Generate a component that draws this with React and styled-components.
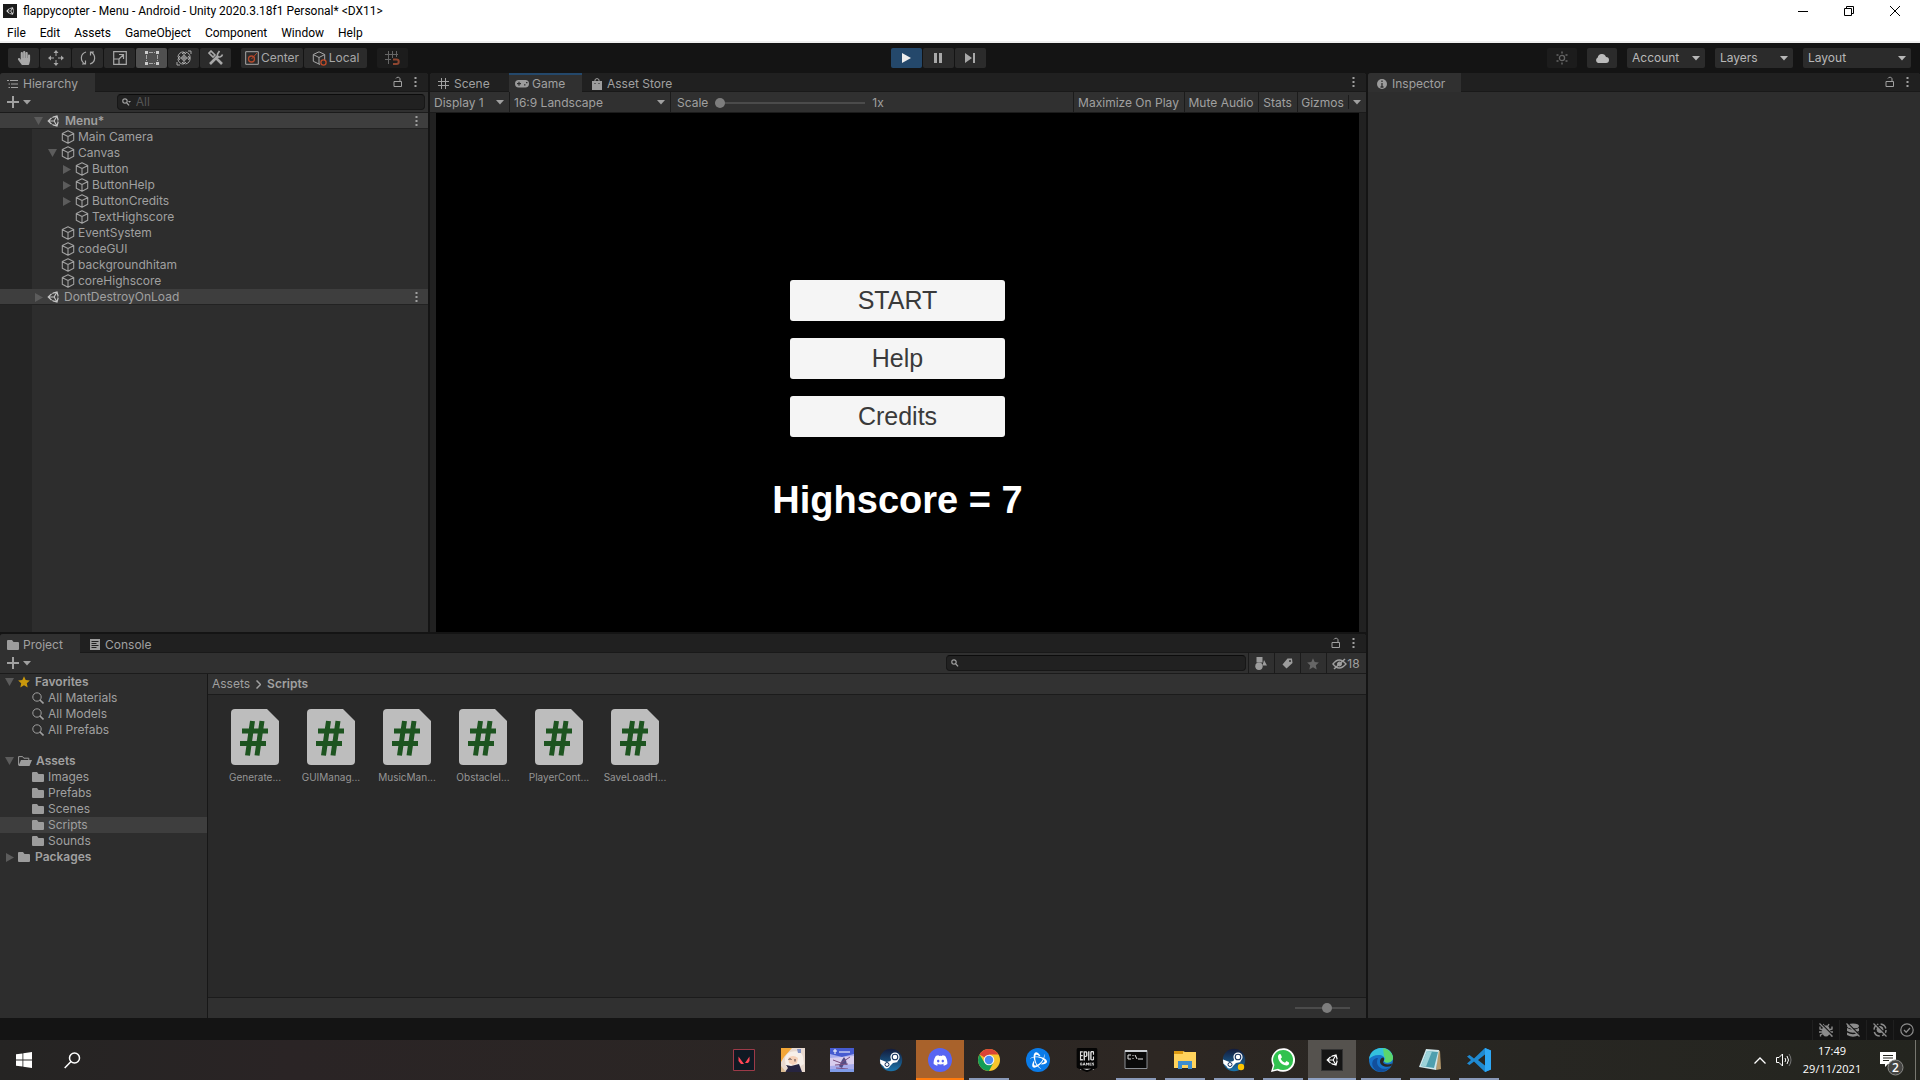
import React from "react";
import styled, { createGlobalStyle, css } from "styled-components";
import { FaDiscord } from "react-icons/fa6";
import { FaHandPaper } from "react-icons/fa";
import { SiEpicgames, SiBattledotnet } from "react-icons/si";

const c = {
  chrome: "#141414",
  strip: "#202020",
  bar: "#303030",
  panel: "#2d2d2d",
  gutter: "#252525",
  line: "#1b1b1b",
  row: "#3e3e3e",
  text: "#a0a0a0",
  icon: "#9c9c9c",
  blue: "#24486b",
};

const GlobalStyle = createGlobalStyle`
  * { box-sizing: border-box; }
  body { margin: 0; background: ${c.chrome}; }
  button, input, select { font: inherit; color: inherit; margin: 0; padding: 0; border: 0; border-radius: 0; background: none; }
  ul { list-style: none; margin: 0; padding: 0; }
  svg { display: block; flex: none; }
`;

/* ---------- shell ---------- */

const Desktop = styled.div`
  display: flex;
  flex-direction: column;
  height: 100vh;
  overflow: hidden;
  color: ${c.text};
  font: 12px/16px Inter, Roboto, sans-serif;
`;

const WindowHead = styled.header`
  background: #fff;
  color: #000;
  font: 12px/22px Roboto, "Noto Sans", sans-serif;
  border-bottom: 2px solid #f0f0f0;
`;

const TitleBar = styled.div`
  display: flex;
  align-items: center;
  height: 22px;
  padding: 0 2px 0 3px;
  gap: 6px;
`;

const Title = styled.span`
  flex: 1;
`;

const WindowControls = styled.div`
  display: flex;
  button {
    display: grid;
    place-items: center;
    width: 46px;
    height: 20px;
  }
`;

const MenuBar = styled.nav`
  display: flex;
  height: 19px;
  gap: 14px;
  padding-left: 7px;
  button {
    line-height: 22px;
  }
`;

const Toolbar = styled.div`
  display: grid;
  grid-template-columns: 1fr auto 1fr;
  align-items: center;
  height: 30px;
  flex: none;
  padding: 0 9px 0 8px;
`;

const ToolSet = styled.div`
  display: flex;
  gap: ${(p) => p.$gap || 10}px;
  ${(p) => p.$end && "justify-content: flex-end;"}
  ${(p) => p.$mid && "margin-right: 43px;"}
`;

const ButtonRun = styled.div`
  display: flex;
  gap: 1px;
`;

const ToolButton = styled.button`
  display: flex;
  align-items: center;
  justify-content: center;
  gap: 2px;
  width: ${(p) => p.$w || 31}px;
  height: 20px;
  border-radius: 2px;
  background: ${(p) => (p.$play ? c.blue : p.$on ? "#505050" : p.$off ? "#1c1c1c" : "#2b2b2b")};
  color: ${(p) => (p.$play ? "#eee" : "#a8a8a8")};
`;

const SelectWrap = styled.label`
  display: flex;
  align-items: center;
  position: relative;
  width: ${(p) => p.$w}px;
  height: 20px;
  ${(p) => (p.$flat ? `border-right: 1px solid ${c.line}; padding-top: 1px;` : "border-radius: 2px; background: #2b2b2b; color: #b8b8b8;")}
  select {
    appearance: none;
    width: 100%;
    height: 100%;
    padding-left: ${(p) => (p.$flat ? 4 : 5)}px;
    background: transparent;
    outline: none;
  }
  svg {
    position: absolute;
    right: 5px;
    pointer-events: none;
  }
`;

const Workspace = styled.main`
  flex: 1;
  min-height: 0;
  display: grid;
  grid-template-columns: 1366fr 552fr;
  gap: 2px;
`;

const LeftSide = styled.div`
  display: grid;
  grid-template-rows: 559fr 384fr;
  gap: 2px;
  min-height: 0;
  min-width: 0;
`;

const TopRow = styled.div`
  display: grid;
  grid-template-columns: 428fr 936fr;
  gap: 2px;
  min-height: 0;
`;

const Panel = styled.section`
  display: flex;
  flex-direction: column;
  min-width: 0;
  min-height: 0;
  background: ${c.panel};
  border-radius: 3px 3px 0 0;
  overflow: hidden;
`;

const TabStrip = styled.div`
  display: flex;
  flex: none;
  height: 19px;
  background: ${c.strip};
  border-bottom: 1px solid #191919;
`;

const Tab = styled.button`
  display: flex;
  align-items: center;
  gap: ${(p) => p.$gap || 5}px;
  width: ${(p) => p.$w}px;
  height: 19px;
  padding: 2px 0 0 ${(p) => p.$pad || 7}px;
  background: ${(p) => (p.$on ? c.bar : "transparent")};
  ${(p) => p.$focus && css`box-shadow: inset 0 2px ${c.blue};`}
  white-space: nowrap;
`;

const TabTools = styled.div`
  display: flex;
  align-items: center;
  gap: 11px;
  margin-left: auto;
  padding-right: 11px;
  button { display: block; }
`;

const SubBar = styled.div`
  display: flex;
  align-items: center;
  flex: none;
  height: 21px;
  background: ${c.bar};
  border-bottom: 1px solid ${c.line};
`;

const AddButton = styled.button`
  display: flex;
  align-items: center;
  gap: 4px;
  width: 40px;
  padding-left: 7px;
`;

const SearchBox = styled.label`
  display: flex;
  align-items: center;
  gap: 5px;
  height: 16px;
  margin-left: auto;
  padding-left: 4px;
  background: #212121;
  border: 1px solid #171717;
  border-top-color: #0c0c0c;
  border-radius: 4px;
  width: ${(p) => p.$w};
  margin-right: ${(p) => p.$mr}px;
  input { flex: 1; min-width: 0; outline: none; height: 14px; }
  input::placeholder { color: #565656; opacity: 1; }
`;

/* ---------- trees ---------- */

const Tree = styled.ul`
  flex: 1;
  min-height: 0;
  background: ${(p) => (p.$gutter ? `linear-gradient(90deg, ${c.gutter} 32px, ${c.panel} 32px)` : c.panel)};
`;

const TreeRow = styled.li`
  display: flex;
  align-items: center;
  height: 16px;
  padding-left: ${(p) => p.$indent}px;
  margin-top: ${(p) => p.$mt || 0}px;
  font-weight: ${(p) => (p.$bold ? 600 : 400)};
  background: ${(p) => (p.$on ? c.row : "transparent")};
  ${(p) => p.$scene && css`box-shadow: inset 0 -1px #222;`}
  span { flex: 1; padding-left: ${(p) => p.$gap || 4}px; }
`;

const Fold = styled.button`
  display: grid;
  place-items: center;
  width: 9px;
  height: 16px;
  margin-right: 4px;
  color: #5c5c5c;
`;

const RowMenu = styled.button`
  margin-right: 10px;
`;

/* ---------- game view ---------- */

const ScaleField = styled.label`
  display: flex;
  align-items: center;
  gap: 7px;
  padding: 1px 0 0 6px;
`;

const Range = styled.input`
  appearance: none;
  width: ${(p) => p.$w}px;
  height: 10px;
  &::-webkit-slider-runnable-track { height: 2px; background: #4b4b4b; }
  &::-webkit-slider-thumb {
    appearance: none;
    width: 10px;
    height: 10px;
    margin-top: -4px;
    border-radius: 50%;
    background: #7d7d7d;
  }
`;

const FlatButtons = styled.div`
  display: flex;
  margin-left: auto;
  height: 20px;
`;

const FlatButton = styled.button`
  display: flex;
  align-items: center;
  justify-content: center;
  width: ${(p) => p.$w}px;
  height: 20px;
  padding: 1px 1px 0 0;
  border-left: 1px solid ${c.line};
  ${(p) => p.$inner && "height: 14px; margin-top: 3px;"}
`;

const Stage = styled.div`
  flex: 1;
  min-height: 0;
  padding: 0 7px 0 6px;
  background: #212121;
`;

const GameScreen = styled.div`
  height: 100%;
  display: flex;
  flex-direction: column;
  align-items: center;
  gap: 17px;
  padding-top: 167px;
  background: #000;
  font-family: "Liberation Sans", Arial, sans-serif;
`;

const GameButton = styled.button`
  width: 215px;
  height: 41px;
  padding-bottom: 2px;
  border-radius: 3px;
  background: #f5f5f5;
  color: #3a3a3a;
  font-size: 25px;
  line-height: 38px;
`;

const Highscore = styled.h1`
  margin: 25px 0 0;
  color: #fff;
  font-size: 38px;
  line-height: 42px;
`;

/* ---------- project ---------- */

const ProjectBody = styled.div`
  flex: 1;
  min-height: 0;
  display: flex;
`;

const Folders = styled.aside`
  display: flex;
  width: 208px;
  border-right: 1px solid #171717;
`;

const Browser = styled.div`
  flex: 1;
  min-width: 0;
  display: flex;
  flex-direction: column;
  background: #292929;
`;

const Crumbs = styled.nav`
  display: flex;
  align-items: center;
  gap: 6px;
  height: 21px;
  padding-left: 4px;
  background: #323232;
  border-bottom: 1px solid ${c.line};
  b { font-weight: 600; }
`;

const FileGrid = styled.ul`
  flex: 1;
  display: flex;
  flex-wrap: wrap;
  align-content: flex-start;
  padding: 14px 9px;
`;

const FileItem = styled.li`
  display: flex;
  flex-direction: column;
  align-items: center;
  gap: 4px;
  width: 76px;
  font-size: 10px;
  color: #969696;
  white-space: nowrap;
`;

const BrowserFoot = styled.div`
  display: flex;
  align-items: center;
  justify-content: flex-end;
  height: 21px;
  padding-right: 16px;
  background: #303030;
  border-top: 1px solid ${c.line};
`;

const StatusBar = styled.footer`
  display: flex;
  justify-content: flex-end;
  flex: none;
  height: 22px;
  padding-top: 2px;
  button {
    display: grid;
    place-items: center;
    width: 27px;
    border-left: 1px solid #1f1f1f;
    color: #8c8c8c;
  }
`;

/* ---------- taskbar ---------- */

const Taskbar = styled.footer`
  display: grid;
  grid-template-columns: 720fr auto 417fr;
  flex: none;
  height: 40px;
  color: #fff;
  background: linear-gradient(90deg, #252423, #2a2425 15%, #2b2624 45%, #2d2723 60%, #272622 80%, #24251f);
  font: 11px/18px "Open Sans", "Noto Sans", sans-serif;
`;

const TaskGroup = styled.div`
  display: flex;
  gap: ${(p) => p.$gap || 0}px;
`;

const Task = styled.button`
  display: grid;
  place-items: center;
  width: 48px;
  height: 40px;
  background: ${(p) => (p.$alert ? "#a9622b" : p.$active ? "#55524e" : "transparent")};
  ${(p) => p.$open && css`
    background: linear-gradient(#8999b8, #8999b8) center bottom / 40px 2px no-repeat;
  `}
  ${(p) => p.$active && "box-shadow: inset 0 -2px #8fa2c4;"}
  ${(p) => p.$alert && "box-shadow: inset 0 -2px #ff7b0d;"}
`;

const Tray = styled.div`
  display: flex;
  align-items: center;
  justify-content: flex-end;
`;

const TrayButton = styled.button`
  display: grid;
  place-items: center;
  width: ${(p) => p.$w}px;
  height: 40px;
  padding-top: ${(p) => p.$pt || 0}px;
`;

const Clock = styled.time`
  width: 72px;
  text-align: center;
  white-space: pre-line;
`;

const ShowDesktop = styled.button`
  width: 5px;
  height: 40px;
  border-left: 1px solid #77776f;
`;

const AppTile = styled.span`
  display: grid;
  place-items: center;
  width: ${(p) => p.$s || 24}px;
  height: ${(p) => p.$s || 24}px;
  background: ${(p) => p.$bg};
  border-radius: ${(p) => (p.$round ? "50%" : 0)};
  border: ${(p) => p.$border || 0};
`;

const EpicTile = styled.span`
  display: grid;
  place-items: center;
  width: 24px;
  height: 24px;
  background: linear-gradient(#dcdcdc, #dcdcdc) center / 14px 20px no-repeat;
`;

/* ---------- glyphs ---------- */

const Svg = ({ w = 14, h, vb, children, ...rest }) => (
  <svg width={w} height={h || w} viewBox={vb || `0 0 ${w} ${h || w}`} fill="none" stroke="currentColor" aria-hidden="true" {...rest}>
    {children}
  </svg>
);
const UnityMark = ({ size, color }) => (
  <Svg w={size} vb="0 0 512 512" stroke="none" fill={color}>
    <path d="M498.110 206.400L445.310 14.720 248.200 66.080 219 116.140l-59.200-.430L15.540 256l144.280 140.320 59.170-.430 29.240 50 197.080 51.360 52.800-191.620-30-49.630zM223.770 124.200L374.550 86.510 288 232.330H114.870zM223.770 387.830L114.870 279.710H288l86.550 145.810zM416.770 401.830L330.170 256l86.580-145.840L458.560 256z" fillRule="evenodd" />
  </Svg>
);
const Caret = () => <Svg w={8} h={5}><path d="M0 0h8L4 4.6z" fill="currentColor" stroke="none" /></Svg>;
const Dots = () => <Svg w={3} h={12} fill="currentColor" stroke="none"><path d="M.5 1h2v2h-2zM.5 5h2v2h-2zM.5 9h2v2h-2z" /></Svg>;
const Lock = () => <Svg w={10} h={12}><path d="M1 5.500h7.500v5H1zM3 2.500C3 1 7 .5 7 3v2.500" /></Svg>;
const Plus = () => <Svg w={12} strokeWidth="2"><path d="M6 0v12M0 6h12" /></Svg>;
const Cube = () => <Svg w={14}><path d="M7 .8l5.700 2.700v6.800L7 13.300l-5.700-3V3.500zM1.500 3.700L7 6.500l5.500-2.800M7 6.500v6.600" strokeWidth="1.1" strokeLinejoin="round" /></Svg>;
const Folder = () => <Svg w={12} h={10} fill={c.icon} stroke="none"><path d="M0 1Q0 0 1 0h4l1.500 2H11q1 0 1 1v6q0 1-1 1H1q-1 0-1-1z" /></Svg>;
const FolderOpen = () => <Svg w={14} h={10}><path d="M.6 9V.6h4l1.200 1.600h5v2" stroke={c.icon} /><path d="M3 4h11l-2.500 6H.4z" fill={c.icon} stroke="none" /></Svg>;
const Lens = () => <Svg w={12}><circle cx="5" cy="5" r="4.2" /><path d="M8 8l3.500 3.500" strokeWidth="1.6" /></Svg>;
const SmallLens = ({ menu }) => <Svg w={9} h={8}><circle cx="3" cy="3" r="2.2" strokeWidth="1.2" /><path d="M4.600 4.600L7 7.400" strokeWidth="1.4" />{menu && <path d="M6 3h3L7.500 4.800z" fill="currentColor" stroke="none" />}</Svg>;
const Star = ({ color }) => <Svg w={12}><path d="M6 .2l1.700 3.900 4.200.4-3.100 2.800.9 4.200L6 9.300l-3.700 2.200.9-4.200L.1 4.500l4.200-.4z" fill={color} stroke="none" /></Svg>;
const Down = () => <Svg w={9} h={8}><path d="M0 0h9L4.500 8z" fill="currentColor" stroke="none" /></Svg>;
const Right = () => <Svg w={8} h={9}><path d="M0 0v9l8-4.500z" fill="currentColor" stroke="none" /></Svg>;
const Slash = () => <><path d="M1.500 0l13 13" stroke={c.chrome} strokeWidth="1.300" /><path d="M.5.500l13 13" strokeWidth="1.200" /></>;
const Bug = () => <><ellipse cx="7" cy="8" rx="4" ry="5.500" fill="currentColor" stroke="none" /><path d="M4 1l1.500 2.500h3L10 1M1 3.500V6l3 1M0 9h4M1.500 13.500V12L4 10.500M13 3.500V6l-3 1M14 9h-4M12.500 13.500V12L10 10.500" strokeWidth="1.400" /></>;

const ScriptFile = () => (
  <Svg w={48} h={56} stroke="none">
    <path d="M4 0h32l12 12v40q0 4-4 4H4q-4 0-4-4V4q0-4 4-4z" fill="#bdbdbd" />
    <path d="M21.500 12L16.500 46.500M31 12l-5 34.500M11 22h26M9 34.500h26" stroke="#1d5420" strokeWidth="5" />
  </Svg>
);

const toolIcons = [
  ["Hand", <FaHandPaper size={14} />],
  ["Move", <Svg w={16}><path d="M8 2v4M8 10v4M2 8h4M10 8h4" /><path d="M8 0l2.500 3h-5zM8 16l2.500-3h-5zM0 8l3-2.500v5zM16 8l-3-2.500v5z" fill="currentColor" stroke="none" /></Svg>],
  ["Rotate", <Svg w={16} h={14}><path d="M6 1C0 3 0 10 5 13M10 13c6-2 6-9 1-12M2 13h3.500V9.500M14 1h-3.500v3.500" strokeWidth="1.200" /></Svg>],
  ["Scale", <Svg w={14}><path d="M.7.7h12.600v12.600H.7zM.7 8h5.300v5M6 3.500h4.500V8M10.500 3.500L5.500 8.500" strokeWidth="1.200" /></Svg>],
  ["Rect", <Svg w={14}><path d="M4 1.500h6M4 12.500h6M1.500 4v6M12.500 4v6" strokeDasharray="4 1" /><path d="M0 0h3v3H0zM11 0h3v3h-3zM0 11h3v3H0zM11 11h3v3h-3z" fill="#ccc" stroke="none" /></Svg>],
  ["Transform", <Svg w={16}><circle cx="8" cy="8" r="6.200" strokeDasharray="8 2" /><path d="M8 2v12M2 8h12M6 4l2-2 2 2M6 12l2 2 2-2M4 6L2 8l2 2M12 6l2 2-2 2M12 1h3v3M4 15H1v-3" /><circle cx="8" cy="8" r="2.300" /></Svg>],
  ["Custom tools", <Svg w={16}><path d="M2 14l8-8M7 7l7 7" strokeWidth="2.600" /><path d="M14.500 4.500a3.500 3.500 0 01-5 2L9.500 4l2-3M1 3l2-2 4 4-2 2z" strokeWidth="1.600" /></Svg>],
];

const hierarchy = [
  { n: "Menu*", d: 0, scene: 1, fold: "open", bold: 1 },
  { n: "Main Camera", d: 1 },
  { n: "Canvas", d: 1, fold: "open" },
  { n: "Button", d: 2, fold: "shut" },
  { n: "ButtonHelp", d: 2, fold: "shut" },
  { n: "ButtonCredits", d: 2, fold: "shut" },
  { n: "TextHighscore", d: 2 },
  { n: "EventSystem", d: 1 },
  { n: "codeGUI", d: 1 },
  { n: "backgroundhitam", d: 1 },
  { n: "coreHighscore", d: 1 },
  { n: "DontDestroyOnLoad", d: 0, scene: 1, fold: "shut" },
];

const folders = [
  { n: "Favorites", root: 1, fold: "open", icon: <Star color="#c9980c" /> },
  { n: "All Materials", icon: <Lens /> },
  { n: "All Models", icon: <Lens /> },
  { n: "All Prefabs", icon: <Lens /> },
  { n: "Assets", root: 1, fold: "open", icon: <FolderOpen />, mt: 15 },
  { n: "Images", icon: <Folder /> },
  { n: "Prefabs", icon: <Folder /> },
  { n: "Scenes", icon: <Folder /> },
  { n: "Scripts", icon: <Folder />, on: 1 },
  { n: "Sounds", icon: <Folder /> },
  { n: "Packages", root: 1, fold: "shut", icon: <Folder /> },
];

const files = ["Generate...", "GUIManag...", "MusicMan...", "ObstacleI...", "PlayerCont...", "SaveLoadH..."];

const Steam = ({ dot }) => (
  <Svg w={24} stroke="none">
    <defs><linearGradient id="steamBg" x1="0" y1="0" x2="0" y2="1"><stop offset="0" stopColor="#131b3b" /><stop offset="1" stopColor="#1b74ab" /></linearGradient></defs>
    <circle cx="12" cy="12" r="11.200" fill="url(#steamBg)" />
    <path d="M1 11.500l6.500 2.500 4-1 1.500-5 6 6-5 1-3 3c-1 3-5 3.500-6.300.500L1.300 15.500z" fill="#fff" />
    <circle cx="16" cy="9" r="4.600" fill="#fff" /><circle cx="16" cy="9" r="2.800" fill="#fff" stroke="#17335e" strokeWidth="1.100" />
    <circle cx="8" cy="16.500" r="2" stroke="#17335e" />
    {dot && <circle cx="19" cy="19" r="3.200" fill="#fdc500" />}
  </Svg>
);

const apps = [
  ["Valorant", <Svg w={22} stroke="none"><path d="M.5.500h21v21H.5z" fill="#0f1923" stroke="#9c3a48" /><path d="M5.500 7.500l5.500 7.500H8L5.500 12zM16.500 7.500V12l-1.500 2h-3z" fill="#ff4655" /></Svg>],
  ["Genshin Impact", <Svg w={24} stroke="none"><path d="M0 0h24v24H0z" fill="#e8d9cf" /><path d="M0 0h11L3 9 0 14z" fill="#f3a637" /><path d="M4 12C3 2 21 0 22 9l1 7-5 3H5z" fill="#f7efe9" /><path d="M7 10q5-4 10 0l-1 5-4 2-4-2z" fill="#f6d1b8" /><path d="M7.500 11.500q1.500-1.500 3 0M14 11v2.500" stroke="#4a3c44" /><path d="M5 17l5 1 8-2 3 8H4l3-4z" fill="#262440" /><path d="M16 1h4v4h-3z" fill="#8193c7" /><path d="M0 18l5 6H0z" fill="#d9b98f" /></Svg>],
  ["Honkai Impact", <Svg w={24} stroke="none"><path d="M0 0h24v24H0z" fill="#a8acec" /><path d="M0 0h24v6L12 9 0 6z" fill="#465bd0" /><path d="M3 3h4M5 1v5M9 4h11" stroke="#fff" /><path d="M0 10l24-2v8L0 18z" fill="#d8cdee" /><path d="M9 18l3-6 2-3 2 3 1 5-3-1-2 4-2-1z" fill="#514d86" /><path d="M3 12l8 3 9-6M6 20l12 1M5 17l13-1" stroke="#7d5080" /><path d="M0 21h24v3H0z" fill="#7f9be8" /></Svg>],
  ["Steam", <Steam />],
  ["Discord", <AppTile $bg="#5865f2" $round><FaDiscord size={15} color="#fff" /></AppTile>, "alert"],
  ["Chrome", <Svg w={24} stroke="none"><circle cx="12" cy="12" r="11" fill="#f7c52c" /><path d="M12 12L2.500 6.500A11 11 0 0121.500 6.500H12z" fill="#db4437" /><path d="M2.500 6.500A11 11 0 0012 23l4.500-8.500-9 0z" fill="#129d58" /><circle cx="12" cy="12" r="5.300" fill="#f4f4f4" /><circle cx="12" cy="12" r="4.200" fill="#4a8af4" /></Svg>, "open"],
  ["Battle.net", <AppTile $bg="#0a7be8" $round><SiBattledotnet size={17} color="#fff" /></AppTile>],
  ["Epic Games", <EpicTile><SiEpicgames size={24} color="#050505" /></EpicTile>],
  ["Command Prompt", <Svg w={24} stroke="none"><path d="M1 2.500h22v18H1z" fill="#0a0a0a" stroke="#8b8f94" /><path d="M1 2h22v2H1z" fill="#c9cdd2" /><path d="M7 7H4v4h3M9 7v1M9 10v1M11 7l2 4M14 11h5" stroke="#e8e8e8" /></Svg>, "open"],
  ["File Explorer", <Svg w={24} stroke="none"><path d="M1 3h9l2 1h11v16H1z" fill="#ffd35c" /><path d="M1 3h9v3H1z" fill="#dd9b13" /><path d="M5 21v-8h14v8h-4v-4H9v4z" fill="#3e8ed0" /></Svg>, "open"],
  ["Steam friends", <Steam dot />, "open"],
  ["WhatsApp", <Svg w={24} stroke="none"><path d="M0 24l1.800-6.500A11.800 11.800 0 1112 23.800a12 12 0 01-5.700-1.400z" fill="#fff" /><path d="M2 22l1.400-5A10 10 0 1112 22a10 10 0 01-5-1.300z" fill="#31c24f" /><path d="M8.500 6c-4 2 .5 12 7.500 11.500 2-.5 2.300-2 2-3L15.500 13l-1.500 1.700c-2-.7-3.500-2.200-4.300-4L11 9.200 9.700 6.200z" fill="#fff" /></Svg>, "open"],
  ["Unity", <AppTile $bg="#151515" $s={22} $border="1px solid #333"><UnityMark size={12} color="#fff" /></AppTile>, "active"],
  ["Edge", <Svg w={24} stroke="none"><circle cx="12" cy="12" r="12" fill="#1773c8" /><path d="M0 11C2-3 22-4 24 9c0 6-8 7-9 4 2-3-1-6-5-6-5 0-8 2-10 4z" fill="#34c1dd" /><path d="M14 .2C20 1 24 6 24 10c0 5-8 6-9 3 2-3 1-4 0-5z" fill="#5bd76d" /><path d="M9 10c-4 8 5 14 12 9-4 6-13 7-17 0-2-4 0-9 5-9z" fill="#124f9c" /><path d="M14.500 9.500c1 2 .5 3-.5 4.500 1 3 6 3 9 1.500l-.500 2.500c-5 2-11 0-11.500-4-.300-2.500 1.500-4.500 3.500-4.500z" fill="#2b2624" /></Svg>, "open"],
  ["Notepad", <Svg w={24} stroke="none"><path d="M20 2l2 1 1 18-5 1z" fill="#b69a6d" /><path d="M8 1l13 1-3 20-17-3z" fill="#cfe6ea" /><path d="M9 3l11 1-4 16-13-2z" fill="#4f9fae" /><path d="M9 3l5 .500-6 15-5-.500z" fill="#9dd3d9" /></Svg>, "open"],
  ["Visual Studio Code", <Svg w={24} stroke="none"><path d="M18 0l6 2.500v19L18 24 7 13.500 2.500 17 0 15.500 4 12 0 8.500 2.500 7 7 10.500zM18 6.500L11 12l7 5.500z" fill="#1f8ad2" fillRule="evenodd" /><path d="M18 0l6 2.500v19L18 24z" fill="#2fa8f5" /></Svg>, "open"],
];

/* ---------- parts ---------- */

function Select({ label, options, ...rest }) {
  return (
    <SelectWrap {...rest}>
      <select aria-label={label} defaultValue={options[0]}>
        {options.map((o) => <option key={o}>{o}</option>)}
      </select>
      <Caret />
    </SelectWrap>
  );
}

function PanelTools({ lock = true }) {
  return (
    <TabTools>
      {lock && <button aria-label="Lock"><Lock /></button>}
      <button aria-label="Panel menu"><Dots /></button>
    </TabTools>
  );
}

function FoldArrow({ state }) {
  return <Fold aria-label="Toggle">{state === "open" ? <Down /> : <Right />}</Fold>;
}

function Hierarchy() {
  return (
    <Panel>
      <TabStrip>
        <Tab $on $w={95}>
          <Svg w={11} h={10}><path d="M3 1.500h8M4 5h7M4 8.500h7M0 1.500h2M1.500 5H3M1.500 8.500H3" /></Svg>Hierarchy
        </Tab>
        <PanelTools />
      </TabStrip>
      <SubBar>
        <AddButton aria-label="Create"><Plus /><Caret /></AddButton>
        <SearchBox $w="72%" $mr={3}>
          <SmallLens menu /><input type="text" placeholder="All" aria-label="Search hierarchy" />
        </SearchBox>
      </SubBar>
      <Tree $gutter>
        {hierarchy.map((r) => (
          <TreeRow key={r.n} $indent={(r.scene ? 34 : 34 + 14 * r.d) + (r.fold ? 0 : 13)} $on={r.scene} $scene={r.scene} $bold={r.bold} $gap={r.bold ? 6 : r.scene ? 5 : 3}>
            {r.fold && <FoldArrow state={r.fold} />}
            {r.scene ? <UnityMark size={12} color="#c4c4c4" /> : <Cube />}
            <span>{r.n}</span>
            {r.scene && <RowMenu aria-label="Scene menu"><Dots /></RowMenu>}
          </TreeRow>
        ))}
      </Tree>
    </Panel>
  );
}

function GamePanel() {
  return (
    <Panel>
      <TabStrip>
        <Tab $w={79} $pad={8}>
          <Svg w={11}><path d="M3.500 0v11M7.500 0v11M0 3.500h11M0 7.500h11" /></Svg>Scene
        </Tab>
        <Tab $on $focus $w={73} $pad={6} $gap={3}>
          <Svg w={14} h={8} stroke="none"><rect width="14" height="7.500" rx="3.700" fill={c.icon} /><path d="M2 3.700h4M4 1.800v4M9 4.800h1.500M11 2.700h1.500" stroke={c.bar} strokeWidth="1.200" /></Svg>Game
        </Tab>
        <Tab $w={110} $pad={10}>
          <Svg w={10} h={12}><path d="M0 3h10v9H0z" fill={c.icon} stroke="none" /><path d="M3 4V1.500q2-2 4 0V4" /><path d="M3 5v1M7 5v1" stroke={c.strip} /></Svg>Asset Store
        </Tab>
        <PanelTools lock={false} />
      </TabStrip>
      <SubBar>
        <Select $flat $w={80} label="Display" options={["Display 1", "Display 2"]} />
        <Select $flat $w={161} label="Aspect" options={["16:9 Landscape", "Free Aspect"]} />
        <ScaleField>Scale <Range $w={150} type="range" min="1" max="5" defaultValue="1" /> 1x</ScaleField>
        <FlatButtons>
          <FlatButton $w={111}>Maximize On Play</FlatButton>
          <FlatButton $w={74}>Mute Audio</FlatButton>
          <FlatButton $w={39}>Stats</FlatButton>
          <FlatButton $w={51}>Gizmos</FlatButton>
          <FlatButton $w={18} $inner aria-label="Gizmo options"><Caret /></FlatButton>
        </FlatButtons>
      </SubBar>
      <Stage>
        <GameScreen>
          <GameButton>START</GameButton>
          <GameButton>Help</GameButton>
          <GameButton>Credits</GameButton>
          <Highscore>Highscore = 7</Highscore>
        </GameScreen>
      </Stage>
    </Panel>
  );
}

function Project() {
  return (
    <Panel>
      <TabStrip>
        <Tab $on $w={80} $gap={4}><Folder />Project</Tab>
        <Tab $w={90} $pad={10}>
          <Svg w={10} h={11} stroke="none"><path d="M0 0h10v11H0z" fill={c.icon} /><path d="M1.500 2.500h7M1.500 4.500h5M1.500 6.500h7M1.500 8.500h5" stroke={c.strip} /></Svg>Console
        </Tab>
        <PanelTools />
      </TabStrip>
      <SubBar>
        <AddButton aria-label="Create"><Plus /><Caret /></AddButton>
        <SearchBox $w="300px" $mr={2}>
          <SmallLens /><input type="text" aria-label="Search assets" />
        </SearchBox>
        <FlatButton $w={26} aria-label="Filter by type"><Svg w={12} h={13} stroke="none" fill={c.icon}><path d="M1.500 0H7.500v5.500h-6zM7.500 8.500l1.500-5.500L12 8.500z" /><circle cx="4" cy="9.300" r="3.700" /></Svg></FlatButton>
        <FlatButton $w={26} aria-label="Filter by label"><Svg w={11} stroke="none" fill={c.icon}><path d="M5.500.500L10 .5l.5 4.500L4.500 10.500.5 6.500zM8 2a1 1 0 100 2 1 1 0 000-2z" fillRule="evenodd" /></Svg></FlatButton>
        <FlatButton $w={26} aria-label="Favorites"><Star color="#666" /></FlatButton>
        <FlatButton $w={40}><Svg w={15} h={12}><path d="M1 6q6-8 13 0-7 8-13 0z" strokeWidth="1.400" /><circle cx="7.500" cy="6" r="2" fill="currentColor" /><path d="M2 11L13 1" strokeWidth="1.500" /></Svg>18</FlatButton>
      </SubBar>
      <ProjectBody>
        <Folders>
          <Tree>
            {folders.map((r) => (
              <TreeRow key={r.n} $indent={r.root ? 5 : 32} $bold={r.root} $on={r.on} $mt={r.mt} $gap={r.root && r.n !== "Assets" ? 5 : 4}>
                {r.root && <FoldArrow state={r.fold} />}
                {r.icon}
                <span>{r.n}</span>
              </TreeRow>
            ))}
          </Tree>
        </Folders>
        <Browser>
          <Crumbs>
            <span>Assets</span>
            <Svg w={5} h={9} strokeWidth="1.500"><path d="M.5.500l4 4-4 4" /></Svg>
            <b>Scripts</b>
          </Crumbs>
          <FileGrid>
            {files.map((f) => <FileItem key={f}><ScriptFile />{f}</FileItem>)}
          </FileGrid>
          <BrowserFoot>
            <Range $w={55} type="range" min="0" max="100" defaultValue="60" aria-label="Icon size" />
          </BrowserFoot>
        </Browser>
      </ProjectBody>
    </Panel>
  );
}

export default function App() {
  return (
    <Desktop>
      <GlobalStyle />
      <WindowHead>
        <TitleBar>
          <AppTile $bg="#1b1b1b" $s={14}><UnityMark size={8} color="#ddd" /></AppTile>
          <Title>flappycopter - Menu - Android - Unity 2020.3.18f1 Personal* &lt;DX11&gt;</Title>
          <WindowControls>
            <button aria-label="Minimize"><Svg w={10}><path d="M0 5.500h10" /></Svg></button>
            <button aria-label="Restore"><Svg w={10}><path d="M.5 2.500h7v7h-7zM2.500 2.500v-2h7v7h-2" /></Svg></button>
            <button aria-label="Close"><Svg w={10}><path d="M0 0l10 10M10 0L0 10" /></Svg></button>
          </WindowControls>
        </TitleBar>
        <MenuBar>
          {["File", "Edit", "Assets", "GameObject", "Component", "Window", "Help"].map((m) => <button key={m}>{m}</button>)}
        </MenuBar>
      </WindowHead>

      <Toolbar>
        <ToolSet>
          <ButtonRun>
            {toolIcons.map(([n, icon]) => <ToolButton key={n} aria-label={n} $on={n === "Rect"}>{icon}</ToolButton>)}
          </ButtonRun>
          <ButtonRun>
            <ToolButton $w={62}>
              <Svg w={14}><path d="M.7.7h12.600v12.600H.7z" /><circle cx="6.500" cy="8" r="3" stroke="#b4492b" strokeWidth="1.300" /><path d="M6.500 8L12 2" stroke="#b4492b" /></Svg>Center
            </ToolButton>
            <ToolButton $w={63}>
              <Svg w={15}><path d="M7 .8l5.700 2.700v6M8 13.500L1.300 10.300V3.500L7 .8M1.500 3.700L7 6.500l5.500-2.800M7 6.500v6.600" /><circle cx="11.500" cy="11.500" r="2.600" stroke="#c04a28" strokeWidth="1.300" /></Svg>Local
            </ToolButton>
          </ButtonRun>
          <ToolButton $off aria-label="Grid snapping">
            <Svg w={15} stroke="#666"><path d="M3.500 0v13M7.500 0v7M11.500 0v6M0 3.500h13M0 8.500h6" /><path d="M8 8.500h3.500a2.200 2.200 0 010 4.500H8" stroke="#8e4630" strokeWidth="2" /></Svg>
          </ToolButton>
        </ToolSet>
        <ToolSet $mid $gap={1}>
          <ToolButton $play aria-label="Play"><Svg w={9} h={10} stroke="none" fill="currentColor"><path d="M0 0l9 5-9 5z" /></Svg></ToolButton>
          <ToolButton aria-label="Pause"><Svg w={8} h={10} stroke="none" fill="currentColor"><path d="M0 0h3v10H0zM5 0h3v10H5z" /></Svg></ToolButton>
          <ToolButton aria-label="Step"><Svg w={10} stroke="none" fill="currentColor"><path d="M0 0l7 5-7 5zM8 0h2v10H8z" /></Svg></ToolButton>
        </ToolSet>
        <ToolSet $end>
          <ToolButton $off $w={30} aria-label="Preview packages">
            <Svg w={14} stroke="#666"><circle cx="7" cy="7" r="2.600" strokeWidth="1.300" /><path d="M7 .5v2M7 11.500v2M1.500 4h2M10.500 4h2M1.500 10h2M10.500 10h2" strokeWidth="1.500" /></Svg>
          </ToolButton>
          <ToolButton $w={30} aria-label="Cloud services">
            <Svg w={14} h={10} stroke="none"><path d="M3 10a3 3 0 01-.3-5.500A4.300 4.300 0 0111 4a3 3 0 010 6z" fill="#bbb" /></Svg>
          </ToolButton>
          <Select $w={78} label="Account" options={["Account"]} />
          <Select $w={78} label="Layers" options={["Layers"]} />
          <Select $w={108} label="Layout" options={["Layout"]} />
        </ToolSet>
      </Toolbar>

      <Workspace>
        <LeftSide>
          <TopRow>
            <Hierarchy />
            <GamePanel />
          </TopRow>
          <Project />
        </LeftSide>
        <Panel>
          <TabStrip>
            <Tab $on $w={93} $pad={9}>
              <Svg w={10} stroke="none"><circle cx="5" cy="5" r="5" fill={c.icon} /><path d="M5 1.500v1.500M5 4v4M3.500 8h3" stroke={c.bar} strokeWidth="1.300" /></Svg>Inspector
            </Tab>
            <PanelTools />
          </TabStrip>
        </Panel>
      </Workspace>

      <StatusBar>
        <button aria-label="Debugger"><Svg w={14}><Bug /><Slash /></Svg></button>
        <button aria-label="Cache server"><Svg w={14}><path d="M1 3q0-2.500 6-2.500T13 3 7 5.500 1 3zM1 5q6 3.500 12 0v3q-6 3.500-12 0zM1 9.500q6 3.500 12 0V12q-6 3.500-12 0z" fill="currentColor" stroke="none" /><Slash /></Svg></button>
        <button aria-label="Auto refresh"><Svg w={14}><circle cx="7" cy="7" r="6" strokeDasharray="7 2.400" strokeWidth="1.500" /><circle cx="7" cy="6.500" r="3" fill="currentColor" /><Slash /></Svg></button>
        <button aria-label="Activity"><Svg w={14}><circle cx="7" cy="7" r="6.200" strokeWidth="1.200" /><path d="M4 7l2.200 2.200L10 5" strokeWidth="1.300" /></Svg></button>
      </StatusBar>

      <Taskbar>
        <TaskGroup>
          <Task aria-label="Start"><Svg w={16} stroke="none" fill="#fff"><path d="M0 2.300L6.500 1.400v6.200H0zM7.300 1.300L16 0v7.600H7.300zM0 8.400h6.500v6.200L0 13.700zM7.300 8.400H16V16l-8.700-1.300z" /></Svg></Task>
          <Task aria-label="Search"><Svg w={17} strokeWidth="1.500"><circle cx="10.500" cy="6" r="5" /><path d="M7 9.500L.7 16" /></Svg></Task>
        </TaskGroup>
        <TaskGroup $gap={1}>
          {apps.map(([n, icon, s]) => (
            <Task key={n} aria-label={n} $alert={s === "alert"} $active={s === "active"} $open={s === "open"}>{icon}</Task>
          ))}
        </TaskGroup>
        <Tray>
          <TrayButton $w={24} aria-label="Hidden icons"><Svg w={12} h={7} strokeWidth="1.300"><path d="M.5 6.500l5.500-5.500 5.500 5.500" /></Svg></TrayButton>
          <TrayButton $w={24} aria-label="Volume"><Svg w={16} h={14}><path d="M.5 4.500h2.500l3.500-3.500v12L3 9.500H.5zM9 5q1.500 2 0 4M11 3q3 4 0 8" /><path d="M13 1q4 6 0 12" stroke="#777" /></Svg></TrayButton>
          <Clock>{"17:49\n29/11/2021"}</Clock>
          <TrayButton $w={47} $pt={6} aria-label="Notifications">
            <Svg w={25} h={25}><path d="M1 1h16v12H9l-3 3v-3H1z" fill="#fff" stroke="none" /><path d="M4 4.500h10M4 7h10M4 9.500h6" stroke="#24251f" /><circle cx="16.500" cy="16.500" r="7.500" fill="#454543" stroke="#8b8b88" /><text x="16.500" y="21" textAnchor="middle" fill="#fff" stroke="none" fontSize="12" fontWeight="600">2</text></Svg>
          </TrayButton>
          <ShowDesktop aria-label="Show desktop" />
        </Tray>
      </Taskbar>
    </Desktop>
  );
}
